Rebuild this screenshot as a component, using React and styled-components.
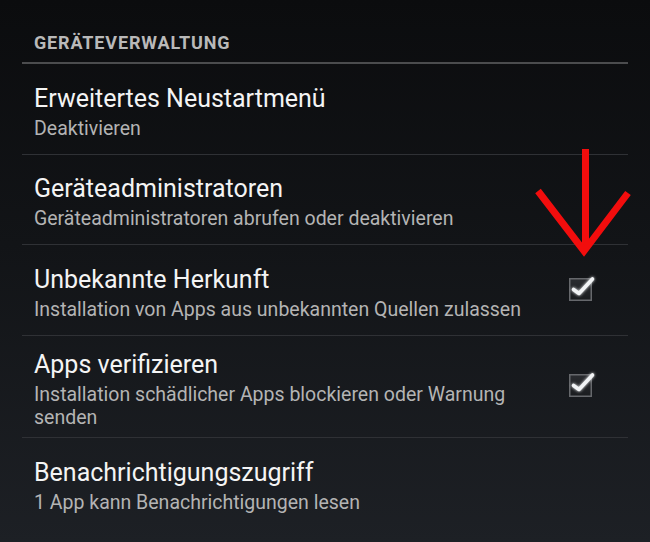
import React from 'react';
import styled, { createGlobalStyle } from 'styled-components';

const COLORS = {
  title: '#f4f4f4',
  summary: '#b4b4b4',
  header: '#b9b9b9',
  headerRule: '#4b4c4e',
  rule: '#2f3135',
  arrow: '#f20d0d',
};

const GlobalStyle = createGlobalStyle`
  html, body {
    margin: 0;
    padding: 0;
    height: 100%;
  }
  body {
    background: linear-gradient(180deg, #0b0c0e 0%, #121417 45%, #1d2025 100%);
    font-family: Roboto, "Noto Sans", sans-serif;
    overflow: hidden;
  }
`;

const Screen = styled.div`
  position: relative;
  width: 650px;
  height: 542px;
  padding: 0 22px;
  box-sizing: border-box;
`;

const SectionHeader = styled.div`
  padding: 32px 0 8px 12px;
  border-bottom: 2px solid ${COLORS.headerRule};
  font-size: 18px;
  line-height: 22px;
  font-weight: 700;
  letter-spacing: 0.85px;
  color: ${COLORS.header};
  text-transform: uppercase;
`;

const Row = styled.div`
  display: flex;
  align-items: center;
  box-sizing: border-box;
  min-height: 90.5px;
  padding: 14px 37px 8px 12px;
  border-bottom: ${p => (p.last ? 'none' : `1px solid ${COLORS.rule}`)};
`;

const Texts = styled.div`
  flex: 1;
  min-width: 0;
  padding-right: 40px;
`;

const Title = styled.div`
  font-size: 25px;
  line-height: 30px;
  color: ${COLORS.title};
`;

const Summary = styled.div`
  margin-top: 3px;
  font-size: 19.5px;
  line-height: 23px;
  color: ${COLORS.summary};
`;

const Box = styled.svg`
  flex: none;
  margin-bottom: 8px;
  margin-right: -4px;
  margin-left: -2px;
  overflow: visible;
`;

const Arrow = styled.svg`
  position: absolute;
  left: 530px;
  top: 145px;
`;

const CheckBox = () => (
  <Box width="26" height="24" viewBox="0 0 26 24">
    <defs>
      <linearGradient id="boxFill" x1="0" y1="0" x2="0" y2="1">
        <stop offset="0" stopColor="#2a2c30" />
        <stop offset="1" stopColor="#1a1c1f" />
      </linearGradient>
      <filter id="glow" x="-30%" y="-30%" width="160%" height="160%">
        <feGaussianBlur stdDeviation="1.4" result="b" />
        <feMerge>
          <feMergeNode in="b" />
          <feMergeNode in="SourceGraphic" />
        </feMerge>
      </filter>
    </defs>
    <rect x="0.75" y="1.75" width="21.5" height="21.5" fill="url(#boxFill)" stroke="#66686c" strokeWidth="1.5" />
    <path
      d="M4.5 12.5 L10 16.5 L23.5 2"
      fill="none"
      stroke="#f2f4f6"
      strokeWidth="3.6"
      strokeLinecap="round"
      strokeLinejoin="round"
      filter="url(#glow)"
    />
  </Box>
);

const items = [
  { title: 'Erweitertes Neustartmenü', summary: 'Deaktivieren' },
  { title: 'Geräteadministratoren', summary: 'Geräteadministratoren abrufen oder deaktivieren' },
  { title: 'Unbekannte Herkunft', summary: 'Installation von Apps aus unbekannten Quellen zulassen', checked: true },
  { title: 'Apps verifizieren', summary: 'Installation schädlicher Apps blockieren oder Warnung senden', checked: true },
  { title: 'Benachrichtigungszugriff', summary: '1 App kann Benachrichtigungen lesen' },
];

const App = () => (
  <>
    <GlobalStyle />
    <Screen>
      <SectionHeader>Geräteverwaltung</SectionHeader>
      {items.map((item, i) => (
        <Row key={item.title} last={i === items.length - 1}>
          <Texts>
            <Title>{item.title}</Title>
            <Summary>{item.summary}</Summary>
          </Texts>
          {item.checked && <CheckBox />}
        </Row>
      ))}
      {/* red annotation arrow pointing at the checkbox */}
      <Arrow width="110" height="120" viewBox="0 0 110 120">
        <g stroke={COLORS.arrow} strokeWidth="7" fill="none" strokeLinejoin="miter">
          <line x1="55.5" y1="4" x2="55.5" y2="104" />
          <polyline points="8,46 54,106 98,48" />
        </g>
      </Arrow>
    </Screen>
  </>
);

export default App;
